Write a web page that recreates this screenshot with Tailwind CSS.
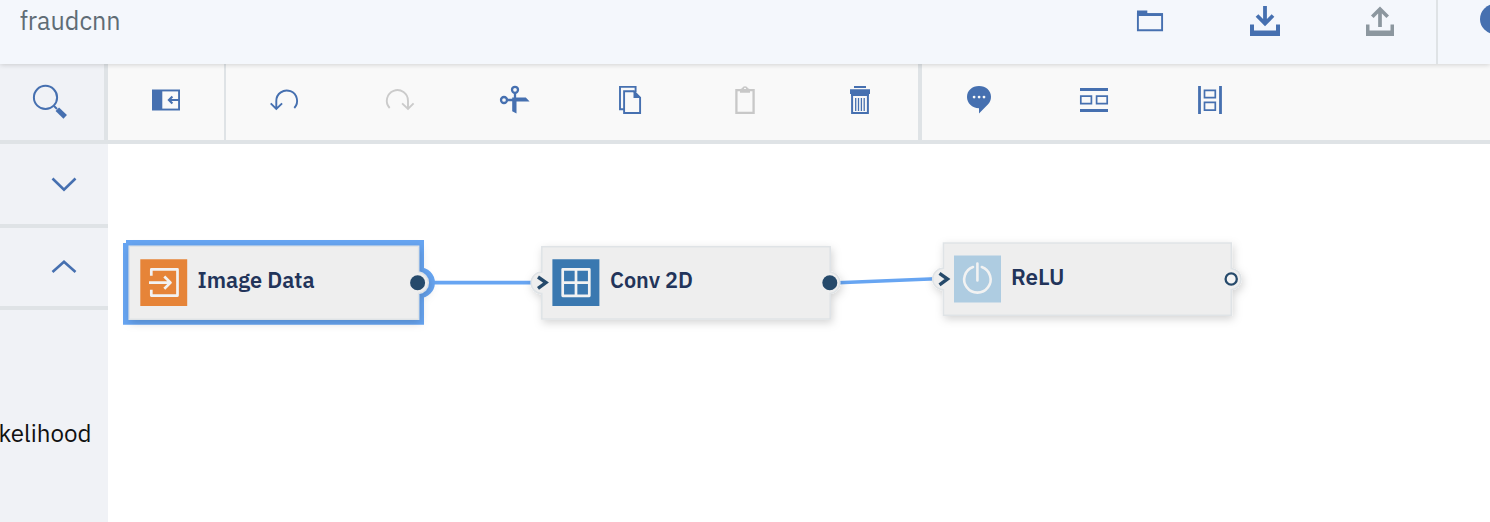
<!DOCTYPE html>
<html lang="en">
<head>
<meta charset="utf-8">
<title>fraudcnn</title>
<script src="https://cdn.jsdelivr.net/npm/@tailwindcss/browser@4"></script>
</head>
<body class="flex h-screen w-screen flex-col overflow-hidden bg-white font-['Roboto','Noto_Sans',sans-serif]">
<header class="relative z-10 flex h-16 shrink-0 bg-[#f4f7fc] shadow-[0_1px_5px_rgba(0,0,0,0.16)]">
  <h1 class="pl-5"><svg class="block h-16 w-[120px]" viewBox="20 0 120 64"><text x="19.7" y="30" font-size="25.5" fill="#5f6c75" textLength="101" lengthAdjust="spacingAndGlyphs" font-family="IBM Plex Sans, Noto Sans, sans-serif">fraudcnn</text></svg></h1>
  <nav class="ml-auto flex text-[#4670b0]">
    <button class="flex w-[115px] items-start justify-center"><svg class="h-10 w-[35px]" viewBox="1131 0 35 40"><path d="M1137.9 13v17.2h24.2V14.2h-15.5M1137 15h25" fill="none" stroke="currentColor" stroke-width="1.9"/><path d="M1137 10.5h10.3v2.7h15.7v2.8h-26z" fill="currentColor"/></svg></button>
    <button class="flex w-[115px] items-start justify-center"><svg class="h-10 w-[35px]" viewBox="1246 0 35 40"><path d="M1250 24.5h4v6h22v-6h4V36h-30z" fill="currentColor"/><path d="M1265 6v18M1257 15.5l8 8 8-8" fill="none" stroke="currentColor" stroke-width="3.8"/></svg></button>
    <button class="flex w-[115px] items-start justify-center text-[#8c979f]"><svg class="h-10 w-[35px]" viewBox="1361 0 35 40"><path d="M1366 24.5h3.5v6h21v-6h3.5V36h-28z" fill="currentColor"/><path d="M1380 27V9M1372.3 16.7l7.7-7.7 7.7 7.7" fill="none" stroke="currentColor" stroke-width="3.7"/></svg></button>
    <div class="w-[54px] overflow-hidden border-l-2 border-[#dfe3e6]"><svg class="h-10 w-[52px]" viewBox="1438 0 52 40"><circle cx="1495" cy="19" r="15" fill="currentColor"/></svg></div>
  </nav>
</header>

<div class="flex h-20 shrink-0 border-b-4 border-[#dfe3e6] bg-[#f9f9f9] text-[#4670b0]">
  <button class="flex w-[108px] items-center justify-center border-r-4 border-[#dfe3e6] bg-[#f0f2f6]"><svg class="size-10" viewBox="32 82 40 40" fill="none" stroke="currentColor"><circle cx="45.5" cy="97.4" r="11.6" stroke-width="2"/><path d="M54 106l3 3" stroke-width="2"/><path d="M57.3 109.3l7.9 7.6" stroke-width="5"/></svg></button>
  <button class="flex w-[118px] items-center justify-center border-r-2 border-[#dfe3e6]"><svg class="size-9" viewBox="148 84 36 36"><path d="M152 89.5h28v21h-28z" fill="currentColor"/><path d="M162.3 91.4h15.8v17.2h-15.8z" fill="#f9f9f9"/><path d="M179 100h-10M172.4 96.5l-3.5 3.5 3.5 3.5" fill="none" stroke="currentColor" stroke-width="2.1"/></svg></button>
  <div class="flex w-[696px] border-r-4 border-[#dfe3e6] pl-px">
    <button class="flex w-[115px] items-center justify-center"><svg class="h-9 w-[35px]" viewBox="267 84 35 36" fill="none" stroke="currentColor" stroke-width="1.9"><path d="M276.3 109V101a10.4 10.4 0 1 1 18 7M270.7 103.4l5.6 5.6 5.8-5.6"/></svg></button>
    <button class="flex w-[115px] items-center justify-center text-[#cbcbcb]"><svg class="h-9 w-[35px]" viewBox="382 84 35 36" fill="none" stroke="currentColor" stroke-width="1.9"><path d="M408 109V101a10.6 10.6 0 1 0-18.3 7M402.1 103.4l5.9 5.6 5.6-5.6"/></svg></button>
    <button class="flex w-[115px] items-center justify-center"><svg class="h-9 w-[35px]" viewBox="497 84 35 36"><g fill="none" stroke="currentColor" stroke-width="2.3"><circle cx="504" cy="100" r="3"/><circle cx="515" cy="89.8" r="3"/><path d="M507 100h8M515 93v7"/></g><path d="M512.2 97.6h13.6l3.8 3.8h-13.1v12.2l-4.3-2.3z" fill="currentColor"/></svg></button>
    <button class="flex w-[115px] items-center justify-center"><svg class="h-9 w-[35px]" viewBox="612 84 35 36"><g fill="none" stroke="currentColor" stroke-width="1.9"><path d="M624 109.2h-4V86.9h15.6v5M624.1 91.3h9.7l6.3 6.4v15.3h-16z"/></g><path d="M633.5 90.5v7.5h7.5z" fill="currentColor"/></svg></button>
    <button class="flex w-[115px] items-center justify-center text-[#c8c8c8]"><svg class="h-9 w-[35px]" viewBox="727 84 35 36"><path d="M736.4 90.1h17.2v22.7h-17.2z" fill="none" stroke="currentColor" stroke-width="2.3"/><path fill-rule="evenodd" d="M740 92.7v-3.4l2-1a3.2 3.2 0 0 1 6 0l2 1v3.4zM745 87.7a1.1 1.1 0 1 0 .01 2.2 1.1 1.1 0 0 0 0-2.2z" fill="currentColor"/></svg></button>
    <button class="flex w-[115px] items-center justify-center"><svg class="h-9 w-[35px]" viewBox="842 84 35 36"><path d="M854 86h12v2h-12zM850 89.3h20v4.7h-1v2h-18v-2h-1z" fill="currentColor"/><path d="M852.1 95v18h15.8V95" fill="none" stroke="currentColor" stroke-width="2"/><path d="M855.7 98v13M858.5 98v13M861.4 98v13M864.2 98v13" stroke="currentColor" stroke-width="1.3"/></svg></button>
  </div>
  <div class="flex">
    <button class="flex w-[115px] items-center justify-center"><svg class="h-9 w-[35px]" viewBox="962 84 35 36"><path d="M979 86c7 0 12 4.6 12 10.8 0 3.3-1 5.6-3.4 8L979 113.6v-5.3c-7-.4-12-5-12-11.3S972 86 979 86z" fill="currentColor"/><g fill="#f9f9f9"><circle cx="974.1" cy="97.1" r="1.4"/><circle cx="979.1" cy="97.1" r="1.4"/><circle cx="984" cy="97.1" r="1.4"/></g></svg></button>
    <button class="flex w-[115px] items-center justify-center"><svg class="h-9 w-[35px]" viewBox="1077 84 35 36" fill="none" stroke="currentColor"><path d="M1080 89.5h28M1080 110.5h28" stroke-width="2.8"/><path d="M1080.8 96.2h10.6v7.4h-10.6zM1096.6 96.2h10.6v7.4h-10.6z" stroke-width="1.7"/></svg></button>
    <button class="flex w-[115px] items-center justify-center"><svg class="h-9 w-[35px]" viewBox="1192 84 35 36" fill="none" stroke="currentColor"><path d="M1199.5 86v28M1220.5 86v28" stroke-width="2.8"/><path d="M1204.5 90.4h10.8v7.3h-10.8zM1204.5 102.4h10.8v7.8h-10.8z" stroke-width="1.7"/></svg></button>
  </div>
</div>

<main class="flex min-h-0 flex-1">
  <aside class="flex w-[108px] shrink-0 flex-col overflow-hidden bg-[#f0f2f6] text-[#4670b0]">
    <div class="flex h-[84px] shrink-0 items-center justify-center border-b-4 border-[#dfe3e6] pl-5"><svg class="h-6 w-8" viewBox="48 172 32 24"><path d="M52.5 178.5l11.5 11.3 11.5-11.3" fill="none" stroke="currentColor" stroke-width="2.6"/></svg></div>
    <div class="flex h-[82px] shrink-0 items-center justify-center border-b-4 border-[#dfe3e6] pl-5"><svg class="h-6 w-8" viewBox="48 255 32 24"><path d="M52.5 272l11.5-10.3L75.5 272" fill="none" stroke="currentColor" stroke-width="2.6"/></svg></div>
    <svg class="mt-[100px] h-12 w-[108px]" viewBox="0 410 108 48"><text x="-1.5" y="442" font-size="24.5" fill="#111" textLength="93" lengthAdjust="spacingAndGlyphs" font-family="IBM Plex Sans, Noto Sans, sans-serif">kelihood</text></svg>
  </aside>

  <svg class="h-[378px] w-[1382px] shrink-0" viewBox="108 144 1382 378">
    <defs>
      <filter id="shade" x="-10%" y="-40%" width="120%" height="190%"><feDropShadow dx="1.5" dy="3" stdDeviation="4.5" flood-color="#000" flood-opacity=".17"/></filter>
    </defs>
    <!-- links -->
    <g stroke="#67a5f2" stroke-width="3.6" fill="none"><path d="M430 282.6h105M838 282.8l98-4"/></g>
    <!-- Image Data, selected -->
    <path d="M126 240h298v84.8H123V243h3z" fill="#67a5f2"/>
    <circle cx="419.5" cy="282.7" r="15.4" fill="#67a5f2"/>
    <g filter="url(#shade)" fill="#eee" stroke="#dfe3e6" stroke-width="1.5"><path d="M129.2 246.2H418.6V272.1A10.7 10.7 0 0 1 418.6 293.4V319.3H129.2z"/></g>
    <path d="M140.3 259.2h46.9v46.9h-46.9z" fill="#e68438"/>
    <path d="M151.3 275.8v-6.4h26.2v26.2h-26.2v-5.8M149 282.6h21.5M164.3 276.5l6.2 6.1-6.2 6.2" fill="none" stroke="#f2f2f2" stroke-width="2.7" stroke-linejoin="round"/>
    <circle cx="417.6" cy="282.7" r="7.5" fill="#264a6b"/>
    <!-- Conv 2D -->
    <g filter="url(#shade)" fill="#eee" stroke="#dfe3e6" stroke-width="1.5"><path d="M541.8 246.7H830.2V272.1A10.7 10.7 0 0 1 830.2 293.4V319H541.8V293.5A10.7 10.7 0 0 1 541.8 272.1z"/></g>
    <path d="M552.4 259.2h47v46.9h-47z" fill="#3a78b0"/>
    <path d="M562.7 269.3h26.6v26.5h-26.6zM576 269.3v26.5M562.7 282.6h26.6" fill="none" stroke="#f2f2f2" stroke-width="2.7" stroke-linejoin="round"/>
    <path d="M538 277l8 5.6-8 5.8" fill="none" stroke="#264a6b" stroke-width="3.4"/>
    <circle cx="829.8" cy="282.7" r="7.5" fill="#264a6b"/>
    <!-- ReLU -->
    <g filter="url(#shade)" fill="#eee" stroke="#dfe3e6" stroke-width="1.5"><path d="M943.4 243H1231.3V268.4A10.7 10.7 0 0 1 1231.3 289.7V315.2H943.4V289.7A10.7 10.7 0 0 1 943.4 268.3z"/></g>
    <path d="M954 255.6h47v46.9h-47z" fill="#aecce1"/>
    <path d="M973 267a13.2 13.2 0 1 0 8.8 0M977.4 263.5v17" fill="none" stroke="#f2f2f2" stroke-width="2.6" stroke-linecap="round"/>
    <path d="M939.5 273.4l8 5.6-8 5.8" fill="none" stroke="#264a6b" stroke-width="3.4"/>
    <circle cx="1231.2" cy="279" r="5.6" fill="#f4f4f4" stroke="#264a6b" stroke-width="2.3"/>
    <g font-family="IBM Plex Sans, Noto Sans, sans-serif" font-size="21.7" font-weight="600" fill="#22345a">
      <text x="197.6" y="288" textLength="117" lengthAdjust="spacingAndGlyphs">Image Data</text>
      <text x="610" y="288" textLength="83" lengthAdjust="spacingAndGlyphs">Conv 2D</text>
      <text x="1011" y="285" textLength="53.5" lengthAdjust="spacingAndGlyphs">ReLU</text>
    </g>
  </svg>
</main>
</body>
</html>
